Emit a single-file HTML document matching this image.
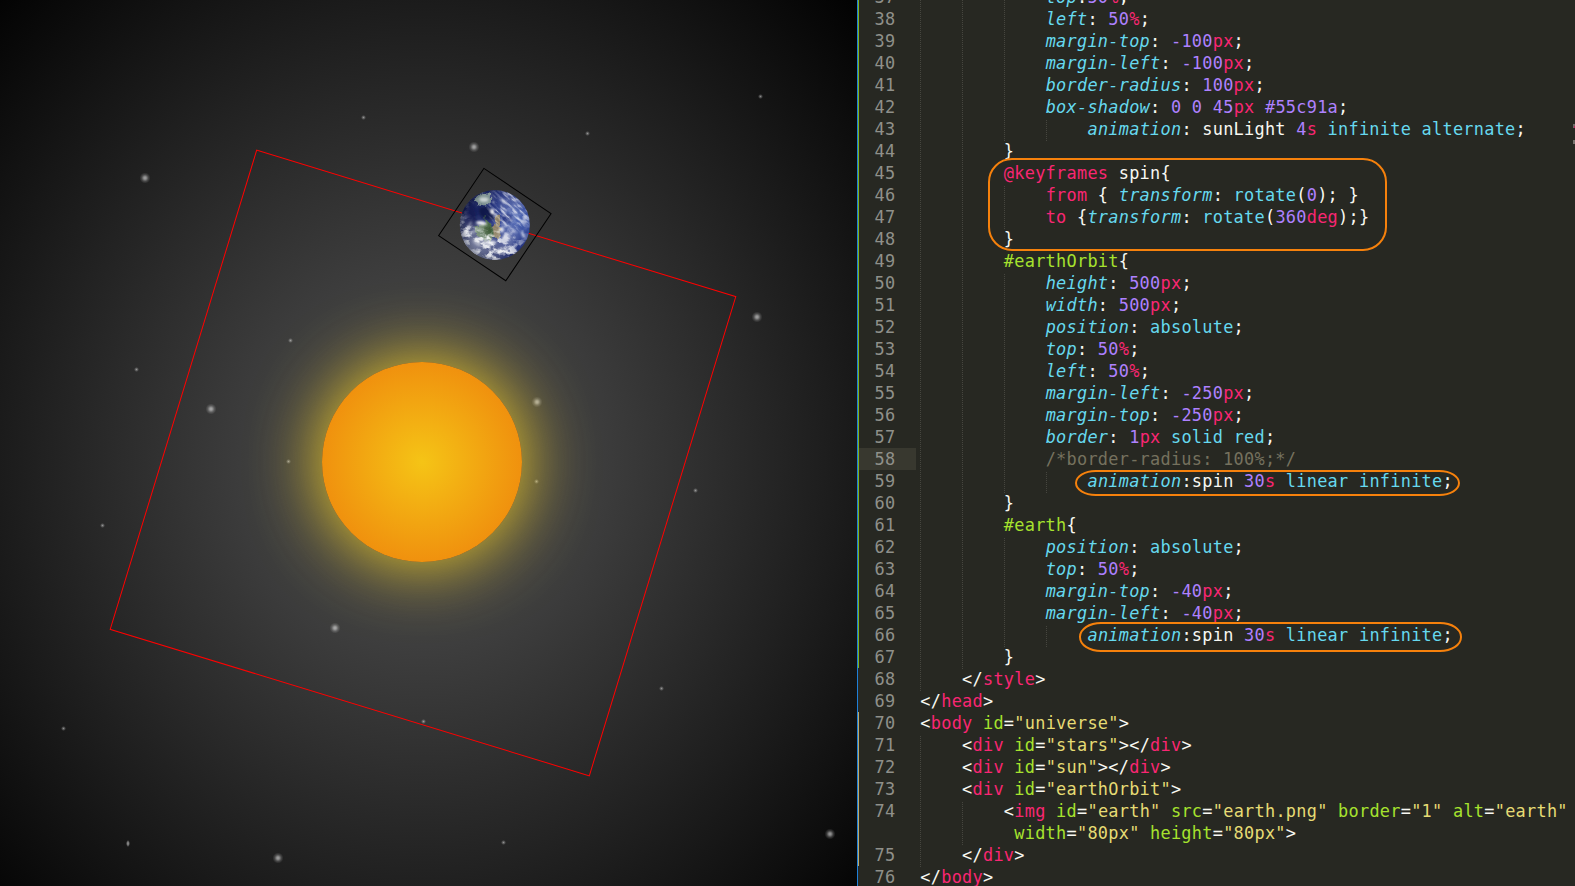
<!DOCTYPE html>
<html lang="en">
<head>
<meta charset="utf-8">
<title>CSS3 solar system - spin animation</title>
<style>
html,body{margin:0;padding:0;background:#272822;}
body{width:1575px;height:886px;position:relative;overflow:hidden;}
#left{position:absolute;left:0;top:0;width:857px;height:886px;overflow:hidden;background:#000;}
#universe{position:absolute;left:0;top:0;width:844px;height:924px;}
#bg{position:absolute;left:-100px;top:-100px;width:1044px;height:1124px;
  background:radial-gradient(ellipse 620px 680px at 522px 562px,#555 0%,#000 100%);}
#stars i{position:absolute;display:block;border-radius:50%;}
#stars .sb{width:12px;height:12px;background:radial-gradient(circle closest-side,rgba(255,255,255,.6) 0%,rgba(255,255,255,.46) 25%,rgba(255,255,255,.18) 55%,rgba(255,255,255,0) 90%);}
#stars .se{width:4px;height:7px;background:radial-gradient(ellipse closest-side,rgba(255,255,255,.55) 0%,rgba(255,255,255,.4) 45%,rgba(255,255,255,0) 100%);}
#stars .ss{width:5px;height:5px;background:radial-gradient(circle closest-side,rgba(255,255,255,.5) 0%,rgba(255,255,255,.28) 40%,rgba(255,255,255,0) 100%);}
#sun{position:absolute;left:322px;top:362px;width:200px;height:200px;border-radius:100px;
  background:radial-gradient(circle closest-side,#f5c416 0%,#f0910e 100%);
  box-shadow:0 0 70px #f5d020;}
#earthOrbit{position:absolute;left:172px;top:212px;width:500px;height:500px;border:1px solid #f00;
  transform:rotate(107deg);}
#earthimg{position:absolute;left:0;top:0;transform:rotate(-214deg);}
#earth{position:absolute;left:-40px;top:210px;width:80px;height:80px;border:1px solid #000;transform:rotate(107deg);}
#right{position:absolute;left:857px;top:0;width:718px;height:886px;background:#272822;overflow:hidden;
  font-family:"DejaVu Sans Mono","Liberation Mono",monospace;font-size:16.9px;letter-spacing:0.271px;line-height:22px;color:#f8f8f2;}
#right .bar1{position:absolute;left:0;top:0;width:1px;height:886px;background:#1f7fd8;}
#right .bar2{position:absolute;left:1px;top:0;width:1px;height:668px;background:#7fb21c;}
#right .bar3{position:absolute;left:1px;top:712px;width:1px;height:154px;background:#b9a96a;}
#right .mm{position:absolute;left:716px;width:2px;height:4px;}
.row{position:absolute;left:0;width:718px;height:22px;white-space:pre;}
.row .no{position:absolute;left:2px;top:0;width:36.5px;height:22px;text-align:right;font-weight:normal;color:#8f908a;padding-right:20px;}
.row.hl .no{background:#38382f;}
.row code{position:absolute;top:0;font:inherit;white-space:pre;}
.row .g{position:absolute;top:2px;width:1px;height:22px;background-image:linear-gradient(#46463f 50%,rgba(0,0,0,0) 50%);background-size:1px 2px;}
.p{color:#66d9ef;font-style:italic}.n{color:#ae81ff}.u{color:#f92672}.c{color:#66d9ef}.s{color:#a6e22e}.y{color:#e6db74}.m{color:#75715e}.w{color:#f8f8f2}
.ann{position:absolute;border:2px solid #f6810c;box-sizing:border-box;}
</style>
</head>
<body>
<div id="left">
 <div id="universe">
  <div id="bg"></div>
  <div id="stars"><i class="sb" style="left:468.1px;top:140.5px"></i><i class="sb" style="left:139.2px;top:171.5px"></i><i class="sb" style="left:750.8px;top:310.7px"></i><i class="sb" style="left:204.8px;top:402.8px"></i><i class="sb" style="left:530.7px;top:395.9px"></i><i class="sb" style="left:329.3px;top:621.7px"></i><i class="sb" style="left:271.9px;top:851.6px"></i><i class="sb" style="left:824.0px;top:827.5px"></i><i class="ss" style="left:758.1px;top:94.1px"></i><i class="ss" style="left:361.1px;top:114.9px"></i><i class="ss" style="left:584.9px;top:131.3px"></i><i class="ss" style="left:287.5px;top:338.2px"></i><i class="ss" style="left:133.5px;top:366.5px"></i><i class="ss" style="left:285.8px;top:458.7px"></i><i class="ss" style="left:534.2px;top:479.4px"></i><i class="ss" style="left:692.6px;top:487.6px"></i><i class="ss" style="left:99.6px;top:522.5px"></i><i class="ss" style="left:659.3px;top:686.3px"></i><i class="ss" style="left:421.2px;top:718.5px"></i><i class="ss" style="left:61.4px;top:725.7px"></i><i class="ss" style="left:500.9px;top:840.3px"></i><i class="se" style="left:126px;top:839.5px"></i></div>
  <div id="sun"></div>
  <div id="earthOrbit">
   <div id="earth"><svg id="earthimg" width="80" height="80" viewBox="0 0 80 80">
 <defs>
  <radialGradient id="eg" cx="82%" cy="42%" r="90%">
   <stop offset="0" stop-color="#4862b2"/><stop offset=".2" stop-color="#384e9f"/><stop offset=".42" stop-color="#273681"/><stop offset=".65" stop-color="#1a2460"/><stop offset="1" stop-color="#10163e"/>
  </radialGradient>
  <radialGradient id="es" cx="54%" cy="49%" r="54%">
   <stop offset=".84" stop-color="#0a1030" stop-opacity="0"/><stop offset="1" stop-color="#0a1030" stop-opacity=".45"/>
  </radialGradient>
  <linearGradient id="eh" x1="0.14" y1="0.9" x2="0.42" y2="0.6">
   <stop offset="0" stop-color="#c2c8d6" stop-opacity=".95"/><stop offset=".3" stop-color="#c2c8d6" stop-opacity=".35"/><stop offset="1" stop-color="#c2c8d6" stop-opacity="0"/>
  </linearGradient>
  <radialGradient id="m1" cx="38%" cy="36%" r="30%"><stop offset="0" stop-color="#000"/><stop offset=".6" stop-color="#000" stop-opacity=".85"/><stop offset="1" stop-color="#000" stop-opacity="0"/></radialGradient>
  <radialGradient id="m2" cx="17%" cy="36%" r="22%"><stop offset="0" stop-color="#000" stop-opacity=".9"/><stop offset="1" stop-color="#000" stop-opacity="0"/></radialGradient>
  <linearGradient id="m3" x1=".75" y1=".1" x2=".35" y2=".6"><stop offset="0" stop-color="#000" stop-opacity=".9"/><stop offset=".55" stop-color="#000" stop-opacity=".8"/><stop offset="1" stop-color="#000" stop-opacity="0"/></linearGradient>
  <radialGradient id="m4" gradientUnits="userSpaceOnUse" cx="57" cy="24" r="27"><stop offset="0" stop-color="#fff"/><stop offset=".6" stop-color="#fff" stop-opacity=".9"/><stop offset="1" stop-color="#fff" stop-opacity="0"/></radialGradient>
  <mask id="cm" maskUnits="userSpaceOnUse" x="0" y="0" width="80" height="80"><rect width="80" height="80" fill="#fff"/><rect width="80" height="80" fill="url(#m3)"/><rect width="80" height="80" fill="url(#m1)"/><rect width="80" height="80" fill="url(#m2)"/></mask>
  <mask id="sm" maskUnits="userSpaceOnUse" x="0" y="0" width="80" height="80"><rect x="0" y="0" width="80" height="80" fill="url(#m4)"/></mask>
  <clipPath id="ec"><circle cx="40" cy="40.4" r="35"/></clipPath>
  <filter id="b1" x="-30%" y="-30%" width="160%" height="160%"><feGaussianBlur stdDeviation="1.1"/></filter>
  <filter id="b2" x="-40%" y="-40%" width="180%" height="180%"><feGaussianBlur stdDeviation="3"/></filter>
  <filter id="cl" x="0" y="0" width="100%" height="100%">
   <feTurbulence type="fractalNoise" baseFrequency=".13 .17" numOctaves="4" seed="11" result="t"/>
   <feColorMatrix in="t" type="matrix" values="0 0 0 0 1  0 0 0 0 1  0 0 0 0 1  4.4 0 0 0 -1.9"/>
   <feGaussianBlur stdDeviation=".35"/>
  </filter>
  <filter id="st" x="0" y="0" width="100%" height="100%">
   <feTurbulence type="fractalNoise" baseFrequency=".09 .32" numOctaves="3" seed="23" result="t"/>
   <feColorMatrix in="t" type="matrix" values="0 0 0 0 1  0 0 0 0 1  0 0 0 0 1  4.2 0 0 0 -1.9"/>
   <feGaussianBlur stdDeviation=".3"/>
  </filter>
  <filter id="ld" x="-20%" y="-20%" width="140%" height="140%">
   <feTurbulence type="fractalNoise" baseFrequency=".3" numOctaves="3" seed="4" result="n"/>
   <feDisplacementMap in="SourceGraphic" in2="n" scale="5" xChannelSelector="R" yChannelSelector="G"/>
   <feGaussianBlur stdDeviation=".65"/>
  </filter>
 </defs>
 <g clip-path="url(#ec)">
  <circle cx="40" cy="40.4" r="35.5" fill="url(#eg)"/>
  <!-- deep ocean -->
  <ellipse cx="32" cy="29" rx="9" ry="6" fill="#0e1544" opacity=".85" filter="url(#b1)" transform="rotate(35 32 29)"/>
  <ellipse cx="15" cy="32" rx="6" ry="10" fill="#131b52" opacity=".7" filter="url(#b1)"/>
  <ellipse cx="52" cy="34" rx="6" ry="5" fill="#1c2870" opacity=".5" filter="url(#b1)"/>
  <!-- land -->
  <g filter="url(#ld)">
   <path d="M28 31 L31 36 L30 40 L20 42 L21 50 L28 56 L37 56 L41 50 L39 42 L34 38 Z" fill="#456543"/>
   <path d="M41 32 L44 31 L45 38 L46 49 L43 55 L39 52 L38 43 L40 38 Z" fill="#8f8266"/>
   <path d="M30 42 L36 44 L37 52 L31 53 L27 48 Z" fill="#35522f" opacity=".8"/>
   <path d="M19 16 L26 9 L36 9 L36 17 L31 21 L24 20 Z" fill="#8ea398" opacity=".85"/>
  </g>
  <!-- streak clouds, upper right -->
  <g mask="url(#sm)"><g transform="rotate(42 40 40)"><rect x="-20" y="-20" width="120" height="120" filter="url(#st)" opacity=".7"/></g></g>
  <!-- textured clouds -->
  <g mask="url(#cm)"><rect x="0" y="0" width="80" height="80" filter="url(#cl)" opacity=".9"/></g>
  <g fill="#fff" filter="url(#b2)">
   <ellipse cx="38" cy="60" rx="20" ry="9" opacity=".2"/>
   <ellipse cx="22" cy="50" rx="9" ry="13" opacity=".2" transform="rotate(20 22 50)"/>
   <ellipse cx="55" cy="50" rx="9" ry="12" opacity=".18"/>
   <ellipse cx="56" cy="22" rx="14" ry="9" opacity=".14" transform="rotate(40 56 22)"/>
  </g>
  <!-- cloud blobs -->
  <g fill="#fff" filter="url(#b1)">
   <ellipse cx="29" cy="15" rx="4.5" ry="2.4" opacity=".6"/>
   <ellipse cx="37.5" cy="27" rx="1.6" ry="3" opacity=".95"/>
   <ellipse cx="40" cy="31.5" rx="1.6" ry="1.6" opacity=".7"/>
   <ellipse cx="26.5" cy="38.5" rx="5.5" ry="2" opacity=".9" transform="rotate(8 26.5 38.5)"/>
   <ellipse cx="14" cy="42" rx="1.4" ry="6" opacity=".4" transform="rotate(25 14 42)"/>
   <ellipse cx="35" cy="58" rx="6.5" ry="2.2" opacity=".85"/>
   <ellipse cx="47" cy="45" rx="2.2" ry="2.8" opacity=".8"/>
   <ellipse cx="52" cy="52" rx="4" ry="3.4" opacity=".45"/>
   <ellipse cx="48" cy="65" rx="8" ry="2.2" opacity=".45" transform="rotate(-15 48 65)"/>
   <ellipse cx="68" cy="50" rx="1.3" ry="4" opacity=".65" transform="rotate(-20 68 50)"/>
   <ellipse cx="22" cy="58" rx="5" ry="2.2" opacity=".45" transform="rotate(40 22 58)"/>
   <ellipse cx="19" cy="47" rx="4" ry="1.5" opacity=".4" transform="rotate(-30 19 47)"/>
  </g>
  <circle cx="40" cy="40.4" r="35.5" fill="url(#eh)"/>
  <circle cx="40" cy="40.4" r="35.5" fill="url(#es)"/>
 </g>
</svg></div>
  </div>
 </div>
</div>
<div id="right">
<span class="mm" style="top:124px;background:linear-gradient(#b3205a,#b3205a) right bottom/1px 2px no-repeat,#6e6a67"></span><span class="mm" style="top:140px;background:#77736f"></span><span class="bar1"></span><span class="bar2"></span><span class="bar3"></span>
<div class="row" style="top:-14px"><b class="no">37</b><i class="g" style="left:63.3px"></i><i class="g" style="left:105.1px"></i><i class="g" style="left:146.9px"></i><code style="left:188.65px"><span class="p">top</span><span class="w">:</span><span class="n">50</span><span class="u">%</span><span class="w">;</span></code></div>
<div class="row" style="top:8px"><b class="no">38</b><i class="g" style="left:63.3px"></i><i class="g" style="left:105.1px"></i><i class="g" style="left:146.9px"></i><code style="left:188.65px"><span class="p">left</span><span class="w">: </span><span class="n">50</span><span class="u">%</span><span class="w">;</span></code></div>
<div class="row" style="top:30px"><b class="no">39</b><i class="g" style="left:63.3px"></i><i class="g" style="left:105.1px"></i><i class="g" style="left:146.9px"></i><code style="left:188.65px"><span class="p">margin-top</span><span class="w">: </span><span class="n">-100</span><span class="u">px</span><span class="w">;</span></code></div>
<div class="row" style="top:52px"><b class="no">40</b><i class="g" style="left:63.3px"></i><i class="g" style="left:105.1px"></i><i class="g" style="left:146.9px"></i><code style="left:188.65px"><span class="p">margin-left</span><span class="w">: </span><span class="n">-100</span><span class="u">px</span><span class="w">;</span></code></div>
<div class="row" style="top:74px"><b class="no">41</b><i class="g" style="left:63.3px"></i><i class="g" style="left:105.1px"></i><i class="g" style="left:146.9px"></i><code style="left:188.65px"><span class="p">border-radius</span><span class="w">: </span><span class="n">100</span><span class="u">px</span><span class="w">;</span></code></div>
<div class="row" style="top:96px"><b class="no">42</b><i class="g" style="left:63.3px"></i><i class="g" style="left:105.1px"></i><i class="g" style="left:146.9px"></i><code style="left:188.65px"><span class="p">box-shadow</span><span class="w">: </span><span class="n">0</span><span class="w"> </span><span class="n">0</span><span class="w"> </span><span class="n">45</span><span class="u">px</span><span class="w"> </span><span class="n">#55c91a</span><span class="w">;</span></code></div>
<div class="row" style="top:118px"><b class="no">43</b><i class="g" style="left:63.3px"></i><i class="g" style="left:105.1px"></i><i class="g" style="left:146.9px"></i><i class="g" style="left:188.7px"></i><code style="left:230.44px"><span class="p">animation</span><span class="w">: sunLight </span><span class="n">4</span><span class="u">s</span><span class="w"> </span><span class="c">infinite</span><span class="w"> </span><span class="c">alternate</span><span class="w">;</span></code></div>
<div class="row" style="top:140px"><b class="no">44</b><i class="g" style="left:63.3px"></i><i class="g" style="left:105.1px"></i><code style="left:146.87px"><span class="w">}</span></code></div>
<div class="row" style="top:162px"><b class="no">45</b><i class="g" style="left:63.3px"></i><i class="g" style="left:105.1px"></i><code style="left:146.87px"><span class="u">@keyframes</span><span class="w"> spin{</span></code></div>
<div class="row" style="top:184px"><b class="no">46</b><i class="g" style="left:63.3px"></i><i class="g" style="left:105.1px"></i><i class="g" style="left:146.9px"></i><code style="left:188.65px"><span class="u">from</span><span class="w"> { </span><span class="p">transform</span><span class="w">: </span><span class="c">rotate</span><span class="w">(</span><span class="n">0</span><span class="w">); }</span></code></div>
<div class="row" style="top:206px"><b class="no">47</b><i class="g" style="left:63.3px"></i><i class="g" style="left:105.1px"></i><i class="g" style="left:146.9px"></i><code style="left:188.65px"><span class="u">to</span><span class="w"> {</span><span class="p">transform</span><span class="w">: </span><span class="c">rotate</span><span class="w">(</span><span class="n">360</span><span class="u">deg</span><span class="w">);}</span></code></div>
<div class="row" style="top:228px"><b class="no">48</b><i class="g" style="left:63.3px"></i><i class="g" style="left:105.1px"></i><code style="left:146.87px"><span class="w">}</span></code></div>
<div class="row" style="top:250px"><b class="no">49</b><i class="g" style="left:63.3px"></i><i class="g" style="left:105.1px"></i><code style="left:146.87px"><span class="s">#earthOrbit</span><span class="w">{</span></code></div>
<div class="row" style="top:272px"><b class="no">50</b><i class="g" style="left:63.3px"></i><i class="g" style="left:105.1px"></i><i class="g" style="left:146.9px"></i><code style="left:188.65px"><span class="p">height</span><span class="w">: </span><span class="n">500</span><span class="u">px</span><span class="w">;</span></code></div>
<div class="row" style="top:294px"><b class="no">51</b><i class="g" style="left:63.3px"></i><i class="g" style="left:105.1px"></i><i class="g" style="left:146.9px"></i><code style="left:188.65px"><span class="p">width</span><span class="w">: </span><span class="n">500</span><span class="u">px</span><span class="w">;</span></code></div>
<div class="row" style="top:316px"><b class="no">52</b><i class="g" style="left:63.3px"></i><i class="g" style="left:105.1px"></i><i class="g" style="left:146.9px"></i><code style="left:188.65px"><span class="p">position</span><span class="w">: </span><span class="c">absolute</span><span class="w">;</span></code></div>
<div class="row" style="top:338px"><b class="no">53</b><i class="g" style="left:63.3px"></i><i class="g" style="left:105.1px"></i><i class="g" style="left:146.9px"></i><code style="left:188.65px"><span class="p">top</span><span class="w">: </span><span class="n">50</span><span class="u">%</span><span class="w">;</span></code></div>
<div class="row" style="top:360px"><b class="no">54</b><i class="g" style="left:63.3px"></i><i class="g" style="left:105.1px"></i><i class="g" style="left:146.9px"></i><code style="left:188.65px"><span class="p">left</span><span class="w">: </span><span class="n">50</span><span class="u">%</span><span class="w">;</span></code></div>
<div class="row" style="top:382px"><b class="no">55</b><i class="g" style="left:63.3px"></i><i class="g" style="left:105.1px"></i><i class="g" style="left:146.9px"></i><code style="left:188.65px"><span class="p">margin-left</span><span class="w">: </span><span class="n">-250</span><span class="u">px</span><span class="w">;</span></code></div>
<div class="row" style="top:404px"><b class="no">56</b><i class="g" style="left:63.3px"></i><i class="g" style="left:105.1px"></i><i class="g" style="left:146.9px"></i><code style="left:188.65px"><span class="p">margin-top</span><span class="w">: </span><span class="n">-250</span><span class="u">px</span><span class="w">;</span></code></div>
<div class="row" style="top:426px"><b class="no">57</b><i class="g" style="left:63.3px"></i><i class="g" style="left:105.1px"></i><i class="g" style="left:146.9px"></i><code style="left:188.65px"><span class="p">border</span><span class="w">: </span><span class="n">1</span><span class="u">px</span><span class="w"> </span><span class="c">solid</span><span class="w"> </span><span class="c">red</span><span class="w">;</span></code></div>
<div class="row hl" style="top:448px"><b class="no">58</b><i class="g" style="left:63.3px"></i><i class="g" style="left:105.1px"></i><i class="g" style="left:146.9px"></i><code style="left:188.65px"><span class="m">/*border-radius: 100%;*/</span></code></div>
<div class="row" style="top:470px"><b class="no">59</b><i class="g" style="left:63.3px"></i><i class="g" style="left:105.1px"></i><i class="g" style="left:146.9px"></i><i class="g" style="left:188.7px"></i><code style="left:230.44px"><span class="p">animation</span><span class="w">:spin </span><span class="n">30</span><span class="u">s</span><span class="w"> </span><span class="c">linear</span><span class="w"> </span><span class="c">infinite</span><span class="w">;</span></code></div>
<div class="row" style="top:492px"><b class="no">60</b><i class="g" style="left:63.3px"></i><i class="g" style="left:105.1px"></i><code style="left:146.87px"><span class="w">}</span></code></div>
<div class="row" style="top:514px"><b class="no">61</b><i class="g" style="left:63.3px"></i><i class="g" style="left:105.1px"></i><code style="left:146.87px"><span class="s">#earth</span><span class="w">{</span></code></div>
<div class="row" style="top:536px"><b class="no">62</b><i class="g" style="left:63.3px"></i><i class="g" style="left:105.1px"></i><i class="g" style="left:146.9px"></i><code style="left:188.65px"><span class="p">position</span><span class="w">: </span><span class="c">absolute</span><span class="w">;</span></code></div>
<div class="row" style="top:558px"><b class="no">63</b><i class="g" style="left:63.3px"></i><i class="g" style="left:105.1px"></i><i class="g" style="left:146.9px"></i><code style="left:188.65px"><span class="p">top</span><span class="w">: </span><span class="n">50</span><span class="u">%</span><span class="w">;</span></code></div>
<div class="row" style="top:580px"><b class="no">64</b><i class="g" style="left:63.3px"></i><i class="g" style="left:105.1px"></i><i class="g" style="left:146.9px"></i><code style="left:188.65px"><span class="p">margin-top</span><span class="w">: </span><span class="n">-40</span><span class="u">px</span><span class="w">;</span></code></div>
<div class="row" style="top:602px"><b class="no">65</b><i class="g" style="left:63.3px"></i><i class="g" style="left:105.1px"></i><i class="g" style="left:146.9px"></i><code style="left:188.65px"><span class="p">margin-left</span><span class="w">: </span><span class="n">-40</span><span class="u">px</span><span class="w">;</span></code></div>
<div class="row" style="top:624px"><b class="no">66</b><i class="g" style="left:63.3px"></i><i class="g" style="left:105.1px"></i><i class="g" style="left:146.9px"></i><i class="g" style="left:188.7px"></i><code style="left:230.44px"><span class="p">animation</span><span class="w">:spin </span><span class="n">30</span><span class="u">s</span><span class="w"> </span><span class="c">linear</span><span class="w"> </span><span class="c">infinite</span><span class="w">;</span></code></div>
<div class="row" style="top:646px"><b class="no">67</b><i class="g" style="left:63.3px"></i><i class="g" style="left:105.1px"></i><code style="left:146.87px"><span class="w">}</span></code></div>
<div class="row" style="top:668px"><b class="no">68</b><i class="g" style="left:63.3px"></i><code style="left:105.08px"><span class="w">&lt;/</span><span class="u">style</span><span class="w">&gt;</span></code></div>
<div class="row" style="top:690px"><b class="no">69</b><code style="left:63.30px"><span class="w">&lt;/</span><span class="u">head</span><span class="w">&gt;</span></code></div>
<div class="row" style="top:712px"><b class="no">70</b><code style="left:63.30px"><span class="w">&lt;</span><span class="u">body</span><span class="w"> </span><span class="s">id</span><span class="w">=</span><span class="y">"universe"</span><span class="w">&gt;</span></code></div>
<div class="row" style="top:734px"><b class="no">71</b><i class="g" style="left:63.3px"></i><code style="left:105.08px"><span class="w">&lt;</span><span class="u">div</span><span class="w"> </span><span class="s">id</span><span class="w">=</span><span class="y">"stars"</span><span class="w">&gt;&lt;/</span><span class="u">div</span><span class="w">&gt;</span></code></div>
<div class="row" style="top:756px"><b class="no">72</b><i class="g" style="left:63.3px"></i><code style="left:105.08px"><span class="w">&lt;</span><span class="u">div</span><span class="w"> </span><span class="s">id</span><span class="w">=</span><span class="y">"sun"</span><span class="w">&gt;&lt;/</span><span class="u">div</span><span class="w">&gt;</span></code></div>
<div class="row" style="top:778px"><b class="no">73</b><i class="g" style="left:63.3px"></i><code style="left:105.08px"><span class="w">&lt;</span><span class="u">div</span><span class="w"> </span><span class="s">id</span><span class="w">=</span><span class="y">"earthOrbit"</span><span class="w">&gt;</span></code></div>
<div class="row" style="top:800px"><b class="no">74</b><i class="g" style="left:63.3px"></i><i class="g" style="left:105.1px"></i><code style="left:146.87px"><span class="w">&lt;</span><span class="u">img</span><span class="w"> </span><span class="s">id</span><span class="w">=</span><span class="y">"earth"</span><span class="w"> </span><span class="s">src</span><span class="w">=</span><span class="y">"earth.png"</span><span class="w"> </span><span class="s">border</span><span class="w">=</span><span class="y">"1"</span><span class="w"> </span><span class="s">alt</span><span class="w">=</span><span class="y">"earth"</span></code></div>
<div class="row" style="top:822px"><b class="no"></b><i class="g" style="left:63.3px"></i><i class="g" style="left:105.1px"></i><code style="left:157.31px"><span class="s">width</span><span class="w">=</span><span class="y">"80px"</span><span class="w"> </span><span class="s">height</span><span class="w">=</span><span class="y">"80px"</span><span class="w">&gt;</span></code></div>
<div class="row" style="top:844px"><b class="no">75</b><i class="g" style="left:63.3px"></i><code style="left:105.08px"><span class="w">&lt;/</span><span class="u">div</span><span class="w">&gt;</span></code></div>
<div class="row" style="top:866px"><b class="no">76</b><code style="left:63.30px"><span class="w">&lt;/</span><span class="u">body</span><span class="w">&gt;</span></code></div>
<div class="ann" style="left:130.5px;top:157.5px;width:399px;height:93.5px;border-radius:24px"></div>
<div class="ann" style="left:218px;top:469.5px;width:384.5px;height:26.5px;border-radius:21px/13.25px"></div>
<div class="ann" style="left:222px;top:622px;width:383px;height:29.5px;border-radius:22px/14.75px"></div>
</div>
</body>
</html>
